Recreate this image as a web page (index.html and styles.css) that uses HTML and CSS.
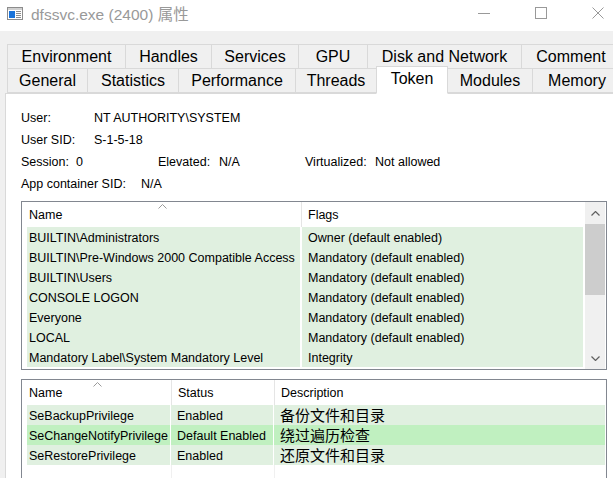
FILE: index.html
```html
<!DOCTYPE html>
<html lang="en">
    <head>
        <meta charset="UTF-8">
        <meta name="viewport" content="width=device-width, initial-scale=1.0">
        <title>dfssvc.exe (2400) 属性</title>
        <link rel="stylesheet" href="styles.css">
    </head>
    <body>
        <div class="titlebar">
            <svg class="app-icon" width="16" height="13" viewBox="0 0 16 13">
                <rect x="0.5" y="0.5" width="15" height="12" fill="#fff" stroke="#8c8c8c"/>
                <rect x="1" y="1" width="14" height="2" fill="#d0d0d0"/>
                <rect x="2" y="4" width="6" height="7" fill="#1a73d9"/>
                <rect x="9" y="4" width="5" height="1" fill="#8c8c8c"/>
                <rect x="9" y="6" width="5" height="1" fill="#8c8c8c"/>
                <rect x="9" y="8" width="5" height="1" fill="#8c8c8c"/>
                <rect x="9" y="10" width="5" height="1" fill="#8c8c8c"/>
            </svg>
            <span class="title">dfssvc.exe (2400) 属性</span>
            <div class="controls">
                <div class="ctl">
                    <svg width="12" height="12" viewBox="0 0 12 12"><path d="M0 6.5H12" stroke="#999" stroke-width="1"/></svg>
                </div>
                <div class="ctl">
                    <svg width="12" height="12" viewBox="0 0 12 12"><rect x="0.5" y="0.5" width="11" height="11" fill="none" stroke="#999"/></svg>
                </div>
                <div class="ctl">
                    <svg width="12" height="12" viewBox="0 0 12 12"><path d="M0.5 0.5L11.5 11.5M11.5 0.5L0.5 11.5" stroke="#999" stroke-width="1"/></svg>
                </div>
            </div>
        </div>

        <div class="tabs">
            <div class="tab-row">
                <div class="tab w119">Environment</div>
                <div class="tab w87">Handles</div>
                <div class="tab w88">Services</div>
                <div class="tab w70">GPU</div>
                <div class="tab w155">Disk and Network</div>
                <div class="tab w100">Comment</div>
            </div>
            <div class="tab-row second">
                <div class="tab w81">General</div>
                <div class="tab w92">Statistics</div>
                <div class="tab w118">Performance</div>
                <div class="tab w82">Threads</div>
                <div class="tab w72 selected">Token</div>
                <div class="tab w86">Modules</div>
                <div class="tab w90">Memory</div>
            </div>
        </div>

        <div class="panel">
            <!--token info-->
            <div class="info-row">
                <span class="lbl w73">User:</span>
                <span>NT AUTHORITY\SYSTEM</span>
            </div>
            <div class="info-row">
                <span class="lbl w73">User SID:</span>
                <span>S-1-5-18</span>
            </div>
            <div class="info-row">
                <span class="lbl w55">Session:</span>
                <span class="lbl w82">0</span>
                <span class="lbl w61">Elevated:</span>
                <span class="lbl w86">N/A</span>
                <span class="lbl w70">Virtualized:</span>
                <span>Not allowed</span>
            </div>
            <div class="info-row">
                <span class="lbl w120">App container SID:</span>
                <span>N/A</span>
            </div>

            <!--groups-->
            <div class="listview groups">
                <div class="lv-main">
                    <div class="lv-header">
                        <div class="hd g-name">Name<svg class="sort" width="9" height="5" viewBox="0 0 9 5"><path d="M0.5 4.5L4.5 0.5L8.5 4.5" fill="none" stroke="#9a9a9a"/></svg></div>
                        <div class="hd g-flags">Flags</div>
                    </div>
                    <div class="row">
                        <div class="cell g-name-c en">BUILTIN\Administrators</div>
                        <div class="cell g-flags-c en">Owner (default enabled)</div>
                    </div>
                    <div class="row">
                        <div class="cell g-name-c en">BUILTIN\Pre-Windows 2000 Compatible Access</div>
                        <div class="cell g-flags-c en">Mandatory (default enabled)</div>
                    </div>
                    <div class="row">
                        <div class="cell g-name-c en">BUILTIN\Users</div>
                        <div class="cell g-flags-c en">Mandatory (default enabled)</div>
                    </div>
                    <div class="row">
                        <div class="cell g-name-c en">CONSOLE LOGON</div>
                        <div class="cell g-flags-c en">Mandatory (default enabled)</div>
                    </div>
                    <div class="row">
                        <div class="cell g-name-c en">Everyone</div>
                        <div class="cell g-flags-c en">Mandatory (default enabled)</div>
                    </div>
                    <div class="row">
                        <div class="cell g-name-c en">LOCAL</div>
                        <div class="cell g-flags-c en">Mandatory (default enabled)</div>
                    </div>
                    <div class="row">
                        <div class="cell g-name-c en">Mandatory Label\System Mandatory Level</div>
                        <div class="cell g-flags-c en">Integrity</div>
                    </div>
                </div>
                <div class="scrollbar">
                    <div class="sb-btn">
                        <svg width="9" height="5" viewBox="0 0 9 5"><path d="M0.5 4.5L4.5 0.5L8.5 4.5" fill="none" stroke="#606060" stroke-width="1.2"/></svg>
                    </div>
                    <div class="sb-thumb"></div>
                    <div class="sb-track"></div>
                    <div class="sb-btn">
                        <svg width="9" height="5" viewBox="0 0 9 5"><path d="M0.5 0.5L4.5 4.5L8.5 0.5" fill="none" stroke="#606060" stroke-width="1.2"/></svg>
                    </div>
                </div>
            </div>

            <!--privileges-->
            <div class="listview privs">
                <div class="lv-main">
                    <div class="lv-header">
                        <div class="hd p-name">Name<svg class="sort" width="9" height="5" viewBox="0 0 9 5"><path d="M0.5 4.5L4.5 0.5L8.5 4.5" fill="none" stroke="#9a9a9a"/></svg></div>
                        <div class="hd p-status">Status</div>
                        <div class="hd p-desc">Description</div>
                    </div>
                    <div class="row wide">
                        <div class="cell p-name-c en">SeBackupPrivilege</div>
                        <div class="cell p-status-c en">Enabled</div>
                        <div class="cell p-desc-c en">备份文件和目录</div>
                    </div>
                    <div class="row wide">
                        <div class="cell p-name-c de">SeChangeNotifyPrivilege</div>
                        <div class="cell p-status-c de">Default Enabled</div>
                        <div class="cell p-desc-c de">绕过遍历检查</div>
                    </div>
                    <div class="row wide">
                        <div class="cell p-name-c en">SeRestorePrivilege</div>
                        <div class="cell p-status-c en">Enabled</div>
                        <div class="cell p-desc-c en">还原文件和目录</div>
                    </div>
                    <div class="grid-lines">
                        <div class="gl p-name"></div>
                        <div class="gl p-status"></div>
                    </div>
                </div>
            </div>
        </div>
    </body>
</html>
```

FILE: styles.css
```css
body{
    margin: 0;
    width: 613px;
    height: 478px;
    overflow: hidden;
    background: #f0f0f0;
    font-family: "Liberation Sans", Arial, sans-serif;
    font-size: 12px;
    color: #000;
}

/* title bar */
.titlebar{
    box-sizing: border-box;
    height: 31px;
    padding-bottom: 5px;
    background: #fff;
    display: flex;
    align-items: center;
    padding-left: 7px;
}
.app-icon{
    flex: none;
}
.title{
    margin-left: 8px;
    font-size: 15.5px;
    color: #999;
    font-family: "Liberation Sans", "Noto Sans CJK SC", sans-serif;
}
.controls{
    margin-left: auto;
    margin-right: -13px;
    display: flex;
}
.ctl{
    width: 57px;
    height: 24px;
    display: flex;
    align-items: center;
    justify-content: center;
}

/* tabs */
.tabs{
    padding-top: 13px;
    padding-left: 7px;
}
.tab-row{
    display: flex;
    white-space: nowrap;
}
.tab-row.second{
    margin-top: -1px;
}
.tab{
    flex: none;
    box-sizing: border-box;
    height: 25px;
    line-height: 24px;
    border: 1px solid #d9d9d9;
    margin-right: -1px;
    background: #f0f0f0;
    text-align: center;
    font-size: 16px;
    overflow: hidden;
}
.tab.selected{
    position: relative;
    z-index: 2;
    background: #fff;
    height: 28px;
    margin-top: -2px;
    line-height: 24px;
    border-bottom-color: #fff;
}
.w119{ width: 119px; }
.w87{ width: 87px; }
.w88{ width: 88px; }
.w70{ width: 70px; }
.w155{ width: 155px; }
.w100{ width: 100px; }
.w81{ width: 81px; }
.w92{ width: 92px; }
.w118{ width: 118px; }
.w82{ width: 82px; }
.w72{ width: 72px; }
.w86{ width: 86px; }
.w90{ width: 90px; }

/* panel */
.panel{
    position: relative;
    z-index: 1;
    margin-left: 5px;
    margin-top: -1px;
    height: 400px;
    background: #fff;
    border-left: 1px solid #d9d9d9;
    border-top: 1px solid #d9d9d9;
    padding: 13px 0 0 15px;
    font-size: 12.5px;
}
.info-row{
    display: flex;
    height: 22px;
    line-height: 22px;
    white-space: nowrap;
}
.lbl{
    flex: none;
}
.w73{ width: 73px; }
.w55{ width: 55px; }
.w61{ width: 61px; }
.w120{ width: 120px; }

/* list views */
.listview{
    width: 586px;
    box-sizing: border-box;
    border: 1px solid #828790;
    background: #fff;
    display: flex;
    font-size: 12.5px;
}
.groups{
    margin-top: 6px;
    height: 169px;
}
.privs{
    margin-top: 9px;
    height: 120px;
}
.lv-main{
    flex: 1;
    min-width: 0;
}
.lv-header{
    display: flex;
    height: 25px;
}
.hd{
    position: relative;
    box-sizing: border-box;
    height: 25px;
    line-height: 27px;
    padding-left: 6px;
    border-right: 1px solid #e5e5e5;
    white-space: nowrap;
}
.sort{
    position: absolute;
    top: 2px;
    left: 50%;
    margin-left: -4px;
}
.g-name{ width: 280px; padding-left: 7px; }
.g-flags{ flex: 1; border-right: none; }
.p-name{ width: 150px; padding-left: 7px; }
.p-status{ width: 103px; }
.p-desc{ flex: 1; border-right: none; }

.row{
    display: flex;
    height: 20px;
    line-height: 22px;
    margin-left: 5px;
    margin-right: 2px;
    gap: 2px;
    white-space: nowrap;
}
.row.wide{
    gap: 1px;
    margin-right: 1px;
}
.cell{
    box-sizing: border-box;
    padding-left: 6px;
    overflow: hidden;
}
.g-name-c{ width: 273px; padding-left: 2px; }
.g-flags-c{ flex: 1; }
.p-name-c{ width: 143px; padding-left: 2px; }
.p-status-c{ width: 102px; }
.p-desc-c{
    flex: 1;
    font-family: "Noto Sans CJK SC", sans-serif;
    font-size: 15px;
    line-height: 20px;
}
.en{ background: #e0f0e0; }
.de{ background: #c0f0c0; }

.grid-lines{
    display: flex;
    height: 40px;
}
.gl{
    box-sizing: border-box;
    border-right: 1px solid #f0f0f0;
}

/* scrollbar */
.scrollbar{
    flex: none;
    width: 20px;
    margin-right: 1px;
    background: #f0f0f0;
    display: flex;
    flex-direction: column;
}
.sb-btn{
    height: 22px;
    display: flex;
    align-items: center;
    justify-content: center;
}
.sb-thumb{
    height: 71px;
    background: #cdcdcd;
}
.sb-track{
    flex: 1;
}
```
